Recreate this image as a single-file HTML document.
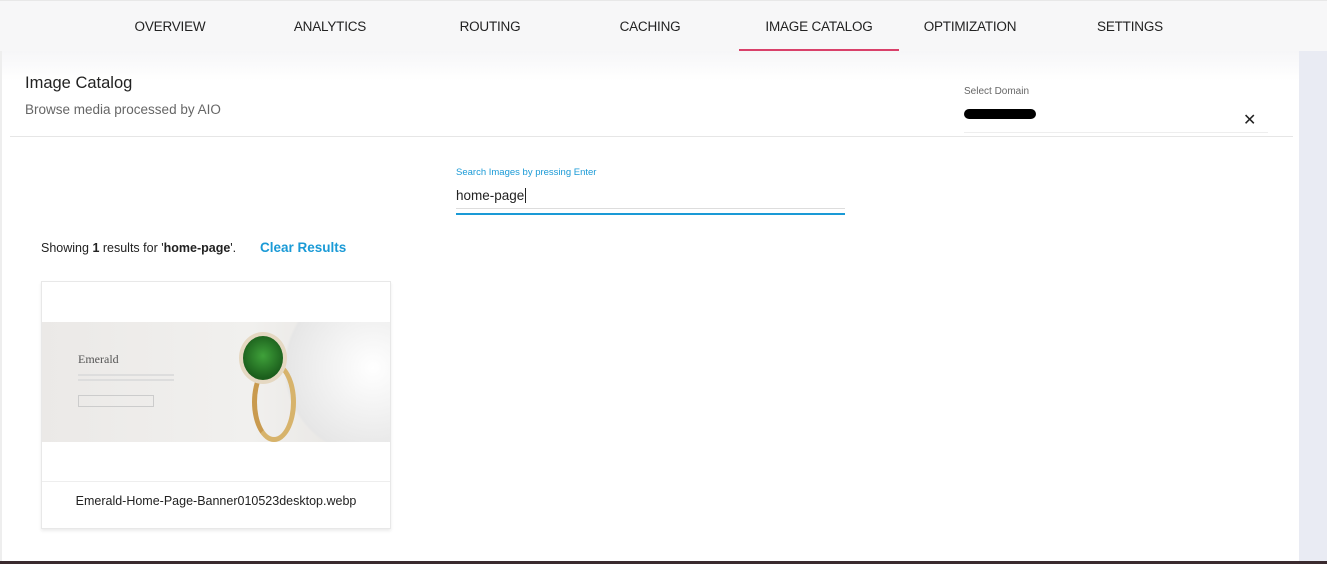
<!DOCTYPE html>
<html><head><style>
*{margin:0;padding:0;box-sizing:border-box}
body{width:1327px;height:564px;overflow:hidden;background:#fff;font-family:"Liberation Sans",Arial,sans-serif;position:relative}
.nav{position:absolute;left:0;top:0;width:1327px;height:51px;background:#f7f7f8;border-top:1px solid #e8e8e8}
.tab{position:absolute;top:0;width:160px;height:51px;line-height:51px;text-align:center;font-size:13.5px;color:#222;letter-spacing:-0.2px}
.act::after{content:"";position:absolute;left:0;top:48px;width:160px;height:2px;background:#d9406a}
.right{position:absolute;left:1299px;top:51px;width:28px;height:510px;background:#e9ebf3}
.leftb{position:absolute;left:0;top:51px;width:2px;height:510px;background:#eee}
.hdr{position:absolute;left:2px;top:51px;width:1297px;height:30px;background:linear-gradient(#f6f6f8,#fff)}
.bottom{position:absolute;left:0;top:561px;width:1327px;height:3px;background:#3a2a2e}
</style></head><body>
<div class="nav">
<div class="tab" style="left:90px">OVERVIEW</div>
<div class="tab" style="left:250px">ANALYTICS</div>
<div class="tab" style="left:410px">ROUTING</div>
<div class="tab" style="left:570px">CACHING</div>
<div class="tab act" style="left:739px">IMAGE CATALOG</div>
<div class="tab" style="left:890px">OPTIMIZATION</div>
<div class="tab" style="left:1050px">SETTINGS</div>
</div>
<div class="hdr"></div>
<div class="leftb"></div>
<div class="right"></div>
<div style="position:absolute;left:25px;top:74px;font-size:16.5px;color:#222">Image Catalog</div>
<div style="position:absolute;left:25px;top:102px;font-size:13.5px;color:#666">Browse media processed by AIO</div>
<div style="position:absolute;left:10px;top:136px;width:1283px;height:1px;background:#e6e6e6"></div>
<div style="position:absolute;left:964px;top:86px;font-size:10px;color:#666">Select Domain</div>
<div style="position:absolute;left:964px;top:109px;width:72px;height:10px;border-radius:5px;background:#000"></div>
<div style="position:absolute;left:964px;top:132px;width:304px;height:1px;background:#eee"></div>
<div style="position:absolute;left:1243px;top:110px;font-size:16px;color:#222">✕</div>
<div style="position:absolute;left:456px;top:167px;font-size:9.5px;color:#1a9ad6">Search Images by pressing Enter</div>
<div style="position:absolute;left:456px;top:188px;font-size:13.5px;color:#222">home-page<span style="border-left:1px solid #222;margin-left:1px"></span></div>
<div style="position:absolute;left:456px;top:208px;width:389px;height:1px;background:#ddd"></div>
<div style="position:absolute;left:456px;top:213px;width:389px;height:2px;background:#1a9ad6"></div>
<div style="position:absolute;left:41px;top:241px;font-size:12.5px;color:#222">Showing <b>1</b> results for '<b>home-page</b>'.</div>
<div style="position:absolute;left:260px;top:240px;font-size:13.5px;color:#1a9ad6;font-weight:bold">Clear Results</div>
<div style="position:absolute;left:41px;top:281px;width:350px;height:248px;border:1px solid #e8e8e8;box-shadow:0 2px 3px rgba(0,0,0,.08);background:#fff">
 <div style="position:absolute;left:0;top:40px;width:348px;height:120px;overflow:hidden;background:linear-gradient(90deg,#ebe9e7,#f1f0ee 60%,#e4e2df)">
  <div style="position:absolute;left:36px;top:30px;font-family:'Liberation Serif',serif;font-size:12px;color:#555">Emerald</div>
  <div style="position:absolute;left:36px;top:52px;width:96px;height:2px;background:#ddd"></div>
  <div style="position:absolute;left:36px;top:57px;width:96px;height:2px;background:#ddd"></div>
  <div style="position:absolute;left:36px;top:73px;width:76px;height:12px;border:1px solid #ccc"></div>
  <div style="position:absolute;left:240px;top:-10px;width:130px;height:140px;background:radial-gradient(circle at 70% 40%,#fff,#e6e6e6 70%,transparent 72%)"></div>
  <div style="position:absolute;left:210px;top:40px;width:44px;height:80px;border:5px solid #d7b36b;border-radius:50%;border-left-color:#c99a4e"></div>
  <div style="position:absolute;left:197px;top:10px;width:48px;height:52px;border-radius:50%;background:radial-gradient(circle at 50% 45%,#3fa13a,#1b5e1c 70%);border:4px solid #e5d8c2"></div>
 </div>
 <div style="position:absolute;left:0;top:199px;width:348px;height:1px;background:#eee"></div>
 <div style="position:absolute;left:0;top:212px;width:348px;text-align:center;font-size:12.5px;color:#222">Emerald-Home-Page-Banner010523desktop.webp</div>
</div>
<div class="bottom"></div>
</body></html>
